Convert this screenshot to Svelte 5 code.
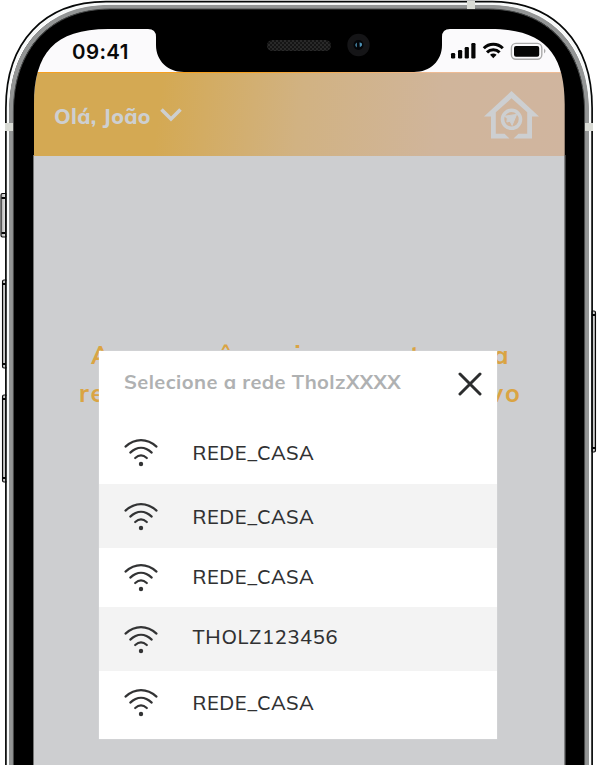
<script>
  const networks = [
    { name: 'REDE_CASA', height: 63 },
    { name: 'REDE_CASA', height: 64, iconShift: 1, textShift: 1 },
    { name: 'REDE_CASA', height: 59, textShift: -1 },
    { name: 'THOLZ123456', height: 64, wide: true, iconShift: 1, textShift: -2 },
    { name: 'REDE_CASA', height: 68, iconShift: -2, textShift: -2 }
  ];
</script>

<main class="phone">
  <div class="screen">
    <div class="status">
      <span class="time">09:41</span>
      <svg class="indicators" width="98" height="20" viewBox="0 0 98 20">
        <g fill="#050505">
          <rect x="1" y="11" width="4.2" height="5.5" rx="1.2" />
          <rect x="8" y="8" width="4.2" height="8.5" rx="1.2" />
          <rect x="14.7" y="5" width="4.2" height="11.5" rx="1.2" />
          <rect x="21.3" y="1" width="4.2" height="15.5" rx="1.2" />
          <path d="M40 12.8a5.2 5.2 0 0 1 6.6 0L43.3 16.3z" />
          <rect x="64" y="4" width="25.2" height="10.7" rx="2" />
          <path d="M94 6.6q3 2.2 0 5z" fill="#aaa" />
        </g>
        <g fill="none" stroke="#050505" stroke-width="3">
          <path d="M33.8 6.3a13.4 13.4 0 0 1 19 0" />
          <path d="M37 10.4a9 9 0 0 1 12.6 0" />
        </g>
        <rect x="61.4" y="1.4" width="30.4" height="15.8" rx="4.5" fill="none" stroke="#aaa" stroke-width="1.4" />
      </svg>
    </div>
    <header>
      <div class="hello">
        <span class="hello-text">Olá, João</span>
        <svg width="22" height="15" viewBox="0 0 22 15"><path d="M1.5 1.5l9.5 9.5 9.5-9.5" fill="none" stroke="#cdcfd1" stroke-width="3.6" /></svg>
      </div>
      <svg class="home" width="56" height="50" viewBox="0 0 56 50">
        <path d="M1 25.5L28.5 0 56 25.5H49V47.5H30.5L35.5 42.7H44.2V21.2L28.5 7.3 12.8 21.2V42.7H21.5L26.5 47.5H8V25.5z" fill="#cdcfd1" />
        <circle cx="28.5" cy="28.3" r="9" fill="none" stroke="#cdcfd1" stroke-width="3.6" />
        <path d="M21.8 25.2l11.8-1.8-4.5 11-2-4.2-3.2.8.4-3.3zM25.5 30.5l3.5-4" fill="#cdcfd1" stroke="#cdcfd1" stroke-width="1" />
      </svg>
    </header>
    <section>
      <p class="line first">Agora você precisa conectar-se a</p>
      <p class="line second">rede wifi criada pelo dispositivo</p>
    </section>
  </div>

  <div class="dialog">
    <div class="title">
      <span class="title-text">Selecione a rede TholzXXXX</span>
      <svg width="24" height="24" viewBox="0 0 24 24"><path d="M2 2l20 20M22 2L2 22" fill="none" stroke="#2c2d2e" stroke-width="3" stroke-linecap="round" /></svg>
    </div>
    {#each networks as network}
      <div class="network" style:height="{network.height}px">
        <svg width="36" height="30" viewBox="0 0 36 30" style:transform="translateY({network.iconShift ?? 0}px)">
          <g fill="none" stroke="#323334" stroke-width="2.2" stroke-linecap="round">
            <path d="M2.5 8.6C12 0 24 0 33.5 8.6" />
            <path d="M7.3 14.6C14 8.3 22 8.3 28.7 14.6" />
            <path d="M12.2 20Q18 14.8 23.8 20" />
          </g>
          <circle cx="18" cy="26" r="2.2" fill="#323334" />
        </svg>
        <span class:wide={network.wide} style:transform="translateY({network.textShift ?? 0}px)">{network.name}</span>
      </div>
    {/each}
  </div>

  <svg class="frame" width="598" height="766" viewBox="0 0 598 766">
    <defs>
      <linearGradient id="key" x1="0" x2="1"><stop offset="0" stop-color="#aaa" /><stop offset="1" stop-color="#fff" /></linearGradient>
      <linearGradient id="key-right" x1="1" x2="0"><stop offset="0" stop-color="#999" /><stop offset="1" stop-color="#fff" /></linearGradient>
      <pattern id="mesh" width="4" height="4" patternUnits="userSpaceOnUse"><rect width="4" height="4" fill="#151515" /><path d="M0 0h2v2H0zM2 2h2v2H2z" fill="#292929" /></pattern>
    </defs>
    <g stroke="#080808" stroke-width="1.1">
      <rect x="1" y="193.5" width="6" height="43.5" rx="1.5" fill="url(#key)" />
      <rect x="2.5" y="280" width="5" height="88" rx="1.5" fill="url(#key)" />
      <rect x="2.5" y="395" width="5" height="87" rx="1.5" fill="url(#key)" />
      <rect x="591.5" y="311" width="4" height="141" rx="1.5" fill="url(#key-right)" />
    </g>
    <path d="M1.5 198H5M1.5 233H5M2 284h4M2 364h4M2 399h4M2 478h4M592 315h4M592 448h4" stroke="#080808" stroke-width="2" />
    <path fill="#000" fill-rule="evenodd" d="M9.5 765V112C9.5 45 47 6 110 6H488C551 6 588.5 45 588.5 112V765H564.7V104C564.7 54 544.7 29 490 29H450Q442 29 442 37V45C442 61 430 72 414 72H184C168 72 156 61 156 45V37Q156 29 148 29H108C54 29 34 54 34 104V765z" />
    <g fill="none">
      <path d="M11.2 765V112C11.2 47 49 6.9 110 6.9H488C549 6.9 586.8 47 586.8 112V765" stroke="#939595" stroke-width="4.4" />
      <path d="M13.4 765V112C13.4 49 51 9 110 9H488C547 9 584.6 49 584.6 112V765" stroke="#4a4c4c" stroke-width="1" />
      <path d="M7.7 765V110C7.7 44 46 3.7 108 3.7H490C552 3.7 590.3 44 590.3 110V765" stroke="#f7f9f9" stroke-width="2.2" />
      <path d="M5.9 765V108C5.9 42 44 1.7 106 1.7H492C554 1.7 592.1 42 592.1 108V765" stroke="#070909" stroke-width="1.7" />
      <path d="M33.5 155V765M565 155V765" stroke="#737474" stroke-width="1" />
    </g>
    <path d="M5 123h8v8H5zM585 123h8v8h-8zM467 1h8v8h-8z" fill="#d9dbd5" />
    <rect x="267" y="40" width="64" height="11" rx="5.5" fill="url(#mesh)" />
    <circle cx="358.5" cy="45" r="11.2" fill="#151517" />
    <circle cx="358.5" cy="45" r="5" fill="#030508" />
    <path d="M356.8 42.5q-3 2.3 0 5zM359.5 42.5q3.3 0 2.3 3.2l-2 1.5z" fill="#4d91b5" />
  </svg>
</main>

<style>
  :global(body) { background: #fff; }
  .phone { position: relative; width: 598px; height: 766px; overflow: hidden; font-family: Mulish, Lato, sans-serif; }
  .screen { margin: 0 33px; width: 532px; height: 765px; background: #cdced0; clip-path: path('M1 765V104C1 54 21 28 75 28H457C511 28 532 54 532 104V765z'); display: flex; flex-direction: column; }
  .status { box-sizing: border-box; height: 72px; padding: 29px 17px 0 39px; display: flex; justify-content: space-between; background: #fbfafc; }
  .time { font: 600 20.5px/45px Inter, sans-serif; letter-spacing: .4px; color: #090909; }
  .indicators { margin: 13px 0 0; }
  header { box-sizing: border-box; height: 83.5px; flex: none; padding: 0 26px 0 21px; display: flex; justify-content: space-between; border-top: 1.5px solid #f1a12d; border-image: linear-gradient(90deg, #f7a01f 40%, #eebb94 75%) 1; background: linear-gradient(97deg, #d4a953 24%, #d1b282 50%, #d0b59b 76%, #d0b59f); }
  .hello { display: flex; gap: 9px; align-items: flex-start; color: #cdcfd1; }
  .hello svg { margin-top: 35px; }
  .hello-text { font-weight: 800; font-size: 21px; line-height: 26px; margin-top: 30px; width: 97px; white-space: nowrap; letter-spacing: .35px; }
  .home { margin: 18px 0 0; }
  section { padding: 180px 46px 0; white-space: nowrap; color: #daa443; }
  .line { margin: 0; font-weight: 700; font-size: 25px; line-height: 38px; }
  .first { margin-left: 12px; letter-spacing: .65px; }
  .second { letter-spacing: 1.95px; }
  .dialog { position: absolute; left: 99px; top: 351px; width: 398px; height: 388px; background: #fff; box-shadow: 0 0 1px #e5e5e5; }
  .title { height: 70px; box-sizing: border-box; display: flex; justify-content: space-between; padding: 17px 15px 0 25px; color: #afb1b2; }
  .title-text { font-weight: 700; font-size: 20px; line-height: 28px; letter-spacing: .4px; }
  .title svg { margin-top: 4px; }
  .network { box-sizing: border-box; padding-left: 24px; display: flex; align-items: center; gap: 33.5px; color: #303132; }
  .network:nth-child(odd) { background: #f3f3f3; }
  .network span { font: 500 20px/28px Mulish, 'Noto Sans', sans-serif; letter-spacing: .5px; }
  .network .wide { letter-spacing: .7px; }
  .frame { position: absolute; inset: 0; pointer-events: none; }
</style>
